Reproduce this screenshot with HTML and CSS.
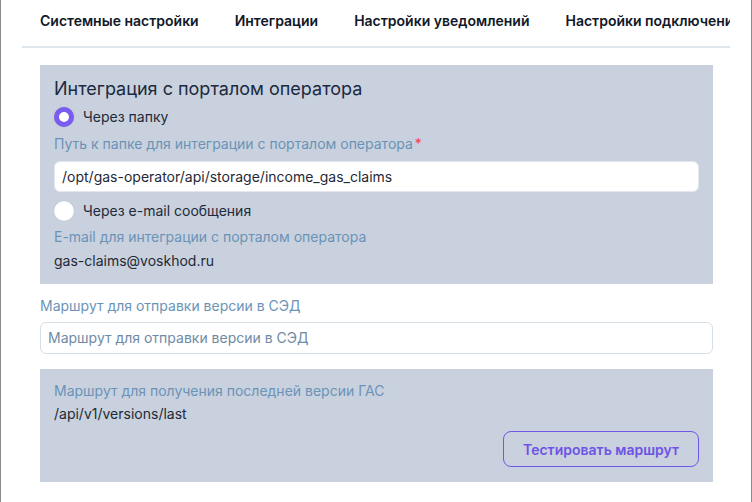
FILE: index.html
```html
<!DOCTYPE html>
<html lang="ru">
<head>
<meta charset="utf-8">
<link rel="stylesheet" href="styles.css">
</head>
<body>
<div class="frame">
  <nav class="tabs">
    <div class="tab">Системные настройки</div>
    <div class="tab active">Интеграции</div>
    <div class="tab">Настройки уведомлений</div>
    <div class="tab">Настройки подключения</div>
  </nav>
  <main class="content">
    <section class="panel portal">
      <h2 class="title">Интеграция с порталом оператора</h2>
      <label class="radio-row r1"><span class="radio checked"></span><span>Через папку</span></label>
      <div class="label l1">Путь к папке для интеграции с порталом оператора<span class="req">*</span></div>
      <div class="input filled">/opt/gas-operator/api/storage/income_gas_claims</div>
      <label class="radio-row r2"><span class="radio"></span><span>Через e-mail сообщения</span></label>
      <div class="label l2">E-mail для интеграции с порталом оператора</div>
      <div class="value v1">gas-claims@voskhod.ru</div>
    </section>
    <div class="label route-label">Маршрут для отправки версии в СЭД</div>
    <div class="input outlined placeholder">Маршрут для отправки версии в СЭД</div>
    <section class="panel last">
      <div class="label">Маршрут для получения последней версии ГАС</div>
      <div class="value v2">/api/v1/versions/last</div>
      <div class="actions"><button class="btn">Тестировать маршрут</button></div>
    </section>
  </main>
</div>
</body>
</html>
```
FILE: styles.css
```css
* { box-sizing: border-box; }
html, body { margin: 0; padding: 0; background: #fff; }
body {
  font-family: Inter, "Noto Sans", "Liberation Sans", sans-serif;
  font-size: 14px;
  color: #1e2a3b;
}
.frame {
  width: 752px;
  height: 502px;
  border-left: 1px solid #8c8c8c;
  border-right: 1px solid #8c8c8c;
  padding: 0 21px;
  overflow: hidden;
}
.tabs {
  display: flex;
  overflow: hidden;
  border-bottom: 2px solid #dfe6ee;
  height: 48px;
}
.tab {
  flex: none;
  white-space: nowrap;
  padding: 11px 18px 0;
  height: 48px;
  line-height: 20px;
  font-weight: 600;
  color: #111827;
  border-bottom: 2px solid transparent;
}
.tab.active { border-bottom-color: #7356e8; }
.content {
  margin: 17px 17px 0 18px;
}
.panel {
  background: #c8d1dd;
  padding: 12px 14px;
}
.portal { padding-bottom: 13px; }
.title {
  margin: 0;
  font-size: 18px;
  font-weight: 400;
  line-height: 24px;
  color: #1b2a40;
}
.radio-row {
  display: flex;
  align-items: center;
  gap: 9px;
  height: 20px;
  line-height: 20px;
  color: #1e2a3b;
}
.r1 { margin-top: 6px; }
.r2 { margin-top: 9px; }
.radio {
  width: 20px;
  height: 20px;
  border-radius: 50%;
  background: #fff;
  flex: none;
  box-shadow: 0 0 1px rgba(120,140,160,0.5);
}
.radio.checked {
  border: 5px solid #7a5cf0;
}
.label {
  line-height: 20px;
  color: #6b93b8;
}
.req { color: #ef4444; margin-left: 2px; }
.l1 { margin-top: 7px; }
.l2 { margin-top: 6px; }
.input {
  background: #fff;
  border-radius: 6px;
  line-height: 20px;
}
.filled {
  margin-top: 7px;
  height: 31px;
  padding: 5px 7px;
  color: #1f2937;
  border: 1px solid #e3e8ee;
}
.value { line-height: 20px; color: #1f2937; }
.v1 { margin-top: 4px; }
.v2 { margin-top: 3px; }
.route-label { margin-top: 12px; }
.outlined {
  margin-top: 6px;
  height: 32px;
  padding: 5px 7px;
  border: 1px solid #d6dee7;
}
.placeholder { color: #6f8aa6; }
.last { margin-top: 15px; padding-bottom: 15px; }
.actions {
  display: flex;
  justify-content: flex-end;
  margin-top: 7px;
}
.btn {
  width: 196px;
  height: 36px;
  border: 1px solid #7356e8;
  border-radius: 8px;
  background: transparent;
  color: #6f53e6;
  font-family: inherit;
  font-size: 14px;
  font-weight: 600;
}
```
